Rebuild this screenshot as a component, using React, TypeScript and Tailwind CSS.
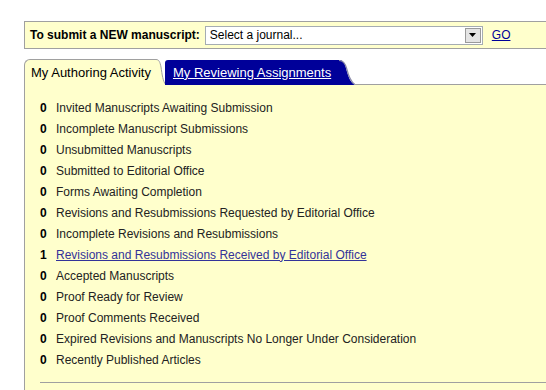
import React from "react";

const items: { count: number; label: string; link?: boolean }[] = [
  { count: 0, label: "Invited Manuscripts Awaiting Submission" },
  { count: 0, label: "Incomplete Manuscript Submissions" },
  { count: 0, label: "Unsubmitted Manuscripts" },
  { count: 0, label: "Submitted to Editorial Office" },
  { count: 0, label: "Forms Awaiting Completion" },
  { count: 0, label: "Revisions and Resubmissions Requested by Editorial Office" },
  { count: 0, label: "Incomplete Revisions and Resubmissions" },
  { count: 1, label: "Revisions and Resubmissions Received by Editorial Office", link: true },
  { count: 0, label: "Accepted Manuscripts" },
  { count: 0, label: "Proof Ready for Review" },
  { count: 0, label: "Proof Comments Received" },
  { count: 0, label: "Expired Revisions and Manuscripts No Longer Under Consideration" },
  { count: 0, label: "Recently Published Articles" },
];

function ActiveTabEdge() {
  return (
    <svg width="11" height="26" viewBox="0 0 11 26" className="block shrink-0">
      <path d="M0 0.5 H1 C4 0.5 5 3 6 8 C7 15 8 23 11 26 H0 Z" fill="#ffffcc" />
      <path d="M0 0.5 H1 C4 0.5 5 3 6 8 C7 15 8 23 11 26" fill="none" stroke="#a0a0a0" strokeWidth="1" />
    </svg>
  );
}

function BlueTabEdge() {
  return (
    <svg width="18" height="25" viewBox="0 0 18 25" className="block shrink-0">
      <path d="M0 0 H2 C6 0 8 3 9 8 C11 16 13 22 18 25 H0 Z" fill="#000099" />
      <path d="M2 0.5 C6 0.5 8 3 9.5 8 C11.5 16 13.5 22 18 24.5" fill="none" stroke="#8a8aa8" strokeWidth="1.2" />
    </svg>
  );
}

export default function App() {
  return (
    <div className="h-[390px] w-[546px] overflow-hidden bg-white pl-[24px] pt-[21px] font-['Liberation_Sans',Arial,sans-serif] text-[12px] text-[#222]">
      <div className="w-[540px]">
        <div className="flex h-[28px] items-center border border-[#a0a0a0] bg-[#ffffcc] pl-[5px]">
          <span className="font-bold text-black">To submit a NEW manuscript:</span>
          <div className="ml-[5px] flex h-[19px] w-[278px] items-center border border-[#a5acb2] bg-white">
            <span className="flex-1 pl-[4px] text-[12px] text-black">Select a journal...</span>
            <span className="mr-px flex h-[15px] w-[16px] items-center justify-center border border-[#9a9a9a] bg-[#e4e4e4]">
              <svg width="7" height="4" viewBox="0 0 7 4">
                <path d="M0 0 H7 L3.5 4 Z" fill="#000" />
              </svg>
            </span>
          </div>
          <a href="#" className="ml-[9px] text-[#000099] underline">
            GO
          </a>
        </div>

        <div className="mt-[10px] flex h-[26px] items-end">
          <div className="flex h-[26px] items-center rounded-tl-[6px] border-l border-t border-[#a0a0a0] bg-[#ffffcc] pl-[6px] pr-[4px] text-[13px] text-black">
            My Authoring Activity
          </div>
          <ActiveTabEdge />
          <div className="-ml-[1px] flex h-[25px] items-center rounded-tl-[3px] bg-[#000099] pl-[8px] pr-[6px] text-[13px] text-white underline">
            My Reviewing Assignments
          </div>
          <BlueTabEdge />
          <div className="h-[26px] flex-1 border-b border-[#a0a0a0]" />
        </div>

        <div className="border-l border-[#a0a0a0] bg-[#ffffcc] pb-[20px] pl-[15px] pt-[12px]">
          <ul>
            {items.map((it) => (
              <li key={it.label} className="flex h-[21px] items-center">
                <span className="w-[16px] font-bold text-black">{it.count}</span>
                {it.link ? (
                  <a href="#" className="text-[#333399] underline">
                    {it.label}
                  </a>
                ) : (
                  <span>{it.label}</span>
                )}
              </li>
            ))}
          </ul>
          <div className="mt-[12px] h-px bg-[#a0a0a0]" />
        </div>
      </div>
    </div>
  );
}
